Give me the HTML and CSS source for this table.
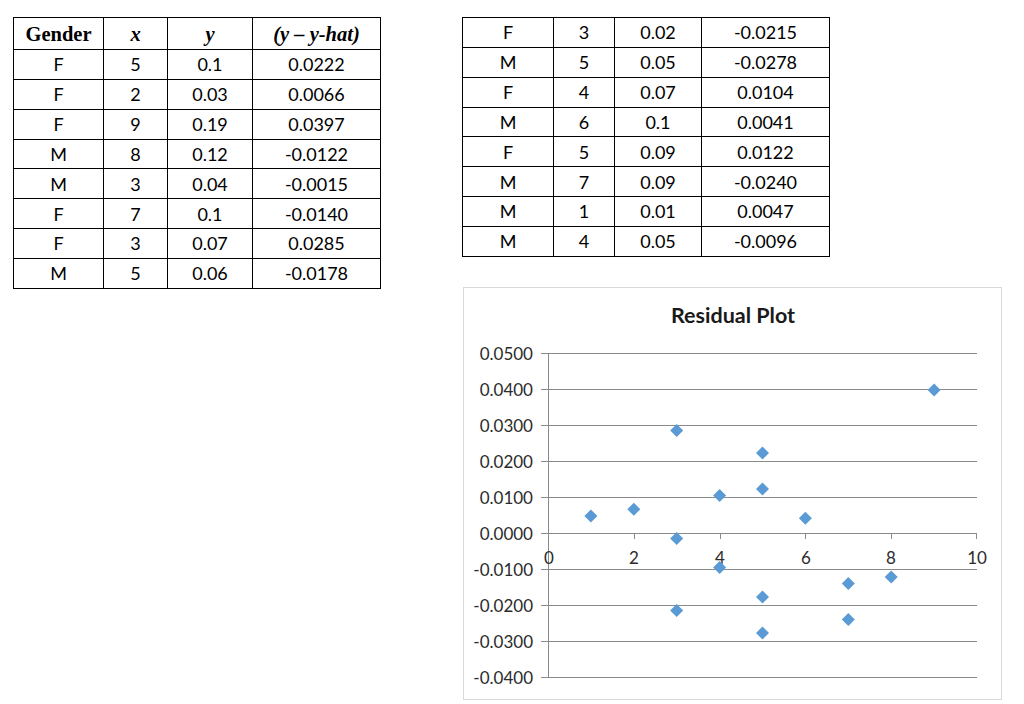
FILE: index.html
```html
<!DOCTYPE html>
<html>
<head>
<meta charset="utf-8">
<link rel="stylesheet" href="styles.css">
</head>
<body>
<div class="page">
  <table class="data">
    <colgroup><col class="c1"><col class="c2"><col class="c3"><col class="c4"></colgroup>
    <tr class="head"><th>Gender</th><th class="it">x</th><th class="it">y</th><th class="it">(y – y-hat)</th></tr>
    <tr><td>F</td><td>5</td><td>0.1</td><td>0.0222</td></tr>
    <tr><td>F</td><td>2</td><td>0.03</td><td>0.0066</td></tr>
    <tr><td>F</td><td>9</td><td>0.19</td><td>0.0397</td></tr>
    <tr><td>M</td><td>8</td><td>0.12</td><td>-0.0122</td></tr>
    <tr><td>M</td><td>3</td><td>0.04</td><td>-0.0015</td></tr>
    <tr><td>F</td><td>7</td><td>0.1</td><td>-0.0140</td></tr>
    <tr><td>F</td><td>3</td><td>0.07</td><td>0.0285</td></tr>
    <tr><td>M</td><td>5</td><td>0.06</td><td>-0.0178</td></tr>
  </table>
  <div class="side">
    <table class="data second">
      <colgroup><col class="d1"><col class="d2"><col class="d3"><col class="d4"></colgroup>
      <tr><td>F</td><td>3</td><td>0.02</td><td>-0.0215</td></tr>
      <tr><td>M</td><td>5</td><td>0.05</td><td>-0.0278</td></tr>
      <tr><td>F</td><td>4</td><td>0.07</td><td>0.0104</td></tr>
      <tr><td>M</td><td>6</td><td>0.1</td><td>0.0041</td></tr>
      <tr><td>F</td><td>5</td><td>0.09</td><td>0.0122</td></tr>
      <tr><td>M</td><td>7</td><td>0.09</td><td>-0.0240</td></tr>
      <tr><td>M</td><td>1</td><td>0.01</td><td>0.0047</td></tr>
      <tr><td>M</td><td>4</td><td>0.05</td><td>-0.0096</td></tr>
    </table>
    <div class="chart">
      <svg width="539" height="413" viewBox="0 0 539 413">
        <defs>
          <polygon id="dm" points="0,-6.5 6.5,0 0,6.5 -6.5,0" />
        </defs>
        <text class="title" x="270" y="36" text-anchor="middle">Residual Plot</text>
        <g class="grid">
          <line x1="78" y1="66.5" x2="514" y2="66.5"/>
          <line x1="78" y1="102.5" x2="514" y2="102.5"/>
          <line x1="78" y1="138.5" x2="514" y2="138.5"/>
          <line x1="78" y1="174.5" x2="514" y2="174.5"/>
          <line x1="78" y1="210.5" x2="514" y2="210.5"/>
          <line x1="78" y1="246.5" x2="514" y2="246.5"/>
          <line x1="78" y1="282.5" x2="514" y2="282.5"/>
          <line x1="78" y1="318.5" x2="514" y2="318.5"/>
          <line x1="78" y1="354.5" x2="514" y2="354.5"/>
          <line x1="78" y1="390.5" x2="514" y2="390.5"/>
          <line x1="85.5" y1="66" x2="85.5" y2="391"/>
          <line x1="171.5" y1="246" x2="171.5" y2="252"/>
          <line x1="257.5" y1="246" x2="257.5" y2="252"/>
          <line x1="342.5" y1="246" x2="342.5" y2="252"/>
          <line x1="428.5" y1="246" x2="428.5" y2="252"/>
          <line x1="513.5" y1="246" x2="513.5" y2="252"/>
        </g>
        <g class="ylab" text-anchor="end">
          <text x="70" y="72.5">0.0500</text>
          <text x="70" y="108.5">0.0400</text>
          <text x="70" y="144.5">0.0300</text>
          <text x="70" y="180.5">0.0200</text>
          <text x="70" y="216.5">0.0100</text>
          <text x="70" y="252.5">0.0000</text>
          <text x="70" y="288.5">-0.0100</text>
          <text x="70" y="324.5">-0.0200</text>
          <text x="70" y="360.5">-0.0300</text>
          <text x="70" y="396.5">-0.0400</text>
        </g>
        <g class="xlab" text-anchor="middle">
          <text x="86" y="277">0</text>
          <text x="171" y="277">2</text>
          <text x="257" y="277">4</text>
          <text x="343" y="277">6</text>
          <text x="428" y="277">8</text>
          <text x="514" y="277">10</text>
        </g>
        <g class="pts">
          <use href="#dm" x="299.5" y="166.1"/>
          <use href="#dm" x="170.8" y="222.2"/>
          <use href="#dm" x="471.1" y="103.1"/>
          <use href="#dm" x="428.2" y="289.9"/>
          <use href="#dm" x="213.7" y="251.4"/>
          <use href="#dm" x="385.3" y="296.4"/>
          <use href="#dm" x="213.7" y="143.4"/>
          <use href="#dm" x="299.5" y="310.1"/>
          <use href="#dm" x="213.7" y="323.4"/>
          <use href="#dm" x="299.5" y="346.1"/>
          <use href="#dm" x="256.6" y="208.6"/>
          <use href="#dm" x="342.4" y="231.2"/>
          <use href="#dm" x="299.5" y="202.1"/>
          <use href="#dm" x="385.3" y="332.4"/>
          <use href="#dm" x="127.9" y="229.1"/>
          <use href="#dm" x="256.6" y="280.6"/>
        </g>
      </svg>
    </div>
  </div>
</div>
</body>
</html>
```
FILE: styles.css
```css
html, body {
  margin: 0;
  padding: 0;
  background: #ffffff;
}
.page {
  display: flex;
  align-items: flex-start;
  gap: 81px;
  padding: 17px 0 0 13px;
  font-family: Lato, "Liberation Sans", sans-serif;
  color: #000;
}
.data {
  border-collapse: collapse;
  table-layout: fixed;
  width: 367px;
  border: 1.5px solid #000;
}
.data td, .data th {
  border: 1px solid #000;
  padding: 0;
  text-align: center;
  vertical-align: middle;
}
.data td {
  height: 28.85px;
  font-size: 18px;
  line-height: 20px;
}
.head th {
  height: 31px;
  font-family: "Liberation Serif", "Times New Roman", serif;
  font-weight: bold;
  font-size: 20.5px;
  line-height: 22px;
}
.head th.it {
  font-style: italic;
}
.c1 { width: 90px; }
.c2 { width: 64px; }
.c3 { width: 85px; }
.c4 { width: 128px; }
.d1 { width: 91px; }
.d2 { width: 61px; }
.d3 { width: 87px; }
.d4 { width: 128px; }
.side {
  display: flex;
  flex-direction: column;
  align-items: flex-start;
}
.chart {
  margin: 30px 0 0 1px;
  width: 539px;
  height: 413px;
  border: 1px solid #d9d9d9;
  box-sizing: border-box;
}
.chart svg {
  display: block;
  margin: -1px 0 0 -1px;
}
.title {
  font-family: Lato, "Liberation Sans", sans-serif;
  font-weight: bold;
  font-size: 21.5px;
  fill: #1a1a1a;
}
.grid line {
  stroke: #8a8a8a;
  stroke-width: 1;
}
.ylab text, .xlab text {
  font-family: Lato, "Liberation Sans", sans-serif;
  font-size: 17px;
  fill: #2b2b2b;
}
.pts use {
  fill: #5b9bd5;
}
```
